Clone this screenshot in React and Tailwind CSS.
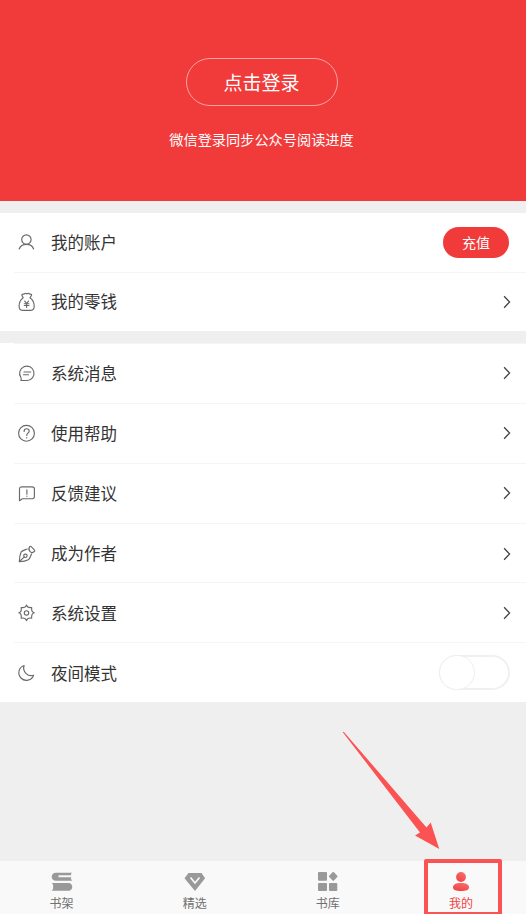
import React from "react";

const line = {
  fill: "none",
  stroke: "#6a6a6a",
  strokeWidth: 1.15,
  strokeLinecap: "round",
  strokeLinejoin: "round",
};

function Icon({ children }) {
  return (
    <svg className="h-5 w-5 shrink-0" viewBox="0 0 20 20" {...line}>
      {children}
    </svg>
  );
}

const icons = {
  user: (
    <Icon>
      <circle cx="9.4" cy="7.6" r="4.7" />
      <path d="M2.2 17C3.3 13.900 5.9 12.300 9.4 12.300s6.2 1.6 7.2 4.7" />
    </Icon>
  ),
  purse: (
    <Icon>
      <path d="M6.2 5.700 4.900 3.400c-.3-.8.4-1.300 1.400-1.300 1 0 1.300-.8 2.200-.8.7 0 .8.500 1.400.500s.8-.500 1.500-.500c.8 0 1 .8 2 .8s1.500.600 1.100 1.300L13 5.700c2.500 1.800 4.200 5 4.200 8.400 0 3-1 4.300-3.200 4.300H5.300c-2.200 0-3.200-1.300-3.200-4.300 0-3.400 1.600-6.600 4.100-8.400Z" />
      <path d="m7.700 9.200 1.900 2.300 1.900-2.300M7.300 11.700h4.700M7.300 13.500h4.700M9.600 11.500v3.900" />
    </Icon>
  ),
  message: (
    <Icon>
      <path d="M3.900 17c.8-.7.500-1.500-.1-2.700A7.200 7.200 0 1 1 10.300 17.500H4" />
      <path d="M7 9h6.700M6.500 11.700h5" />
    </Icon>
  ),
  help: (
    <Icon>
      <circle cx="9.500" cy="10.300" r="7.900" />
      <path d="M7.100 8.400c0-1.700 1-2.700 2.500-2.700s2.600 1 2.600 2.400c0 2-2.500 2.200-2.500 4.400M9.700 14.600v.3" />
    </Icon>
  ),
  feedback: (
    <Icon>
      <path d="M2.500 17.700V6c0-1.400.8-2.200 2.200-2.200h10.500c1.400 0 2.200.8 2.200 2.200v7.600c0 1.400-.8 2.100-2.200 2.100H5.300L2.500 17.700Z" />
      <path d="M9.900 6.700v4.500M9.900 13v.3" />
    </Icon>
  ),
  pen: (
    <Icon>
      <path d="M12.600 2.900c.5-.7 1-.8 1.600-.3l3.100 3.200c.6.700.6 1.200-.1 1.700-1.400 1.200-2.800 1.500-4.100.2s-1.500-3.200-.5-4.800Z" />
      <path d="M10.200 5C7.700 6 5.300 6.400 4 8.200c-1.200 3-1.600 5.900-1.700 9.500 3.500-.1 6.400-.5 9-1.900 2-1.300 2.200-3.700 3.200-5.900" />
      <circle cx="8.400" cy="11.800" r="1.700" />
      <path d="m2.500 17.500 4.600-4.400" />
    </Icon>
  ),
  gear: (
    <Icon>
      <path d="M9.500 2.100c.6 2.300 2 2.900 5.200 2.500-.4 3.100.3 4.600 2.600 5.200-2.300.7-3 2.200-2.600 5.300-3.200-.4-4.600.2-5.200 2.500-.7-2.300-2.100-2.900-5.300-2.500.5-3.100-.2-4.600-2.400-5.300 2.200-.6 2.900-2.100 2.400-5.200 3.200.400 4.600-.200 5.300-2.500Z" />
      <circle cx="9.500" cy="9.900" r="2.200" />
    </Icon>
  ),
  moon: (
    <Icon>
      <path d="M7.100 2.500a7.600 7.600 0 1 0 9.500 9.800A7.700 7.700 0 0 1 7.100 2.500Z" />
    </Icon>
  ),
};

function Chevron() {
  return (
    <svg className="mr-[14px] h-4 w-[10px]" viewBox="0 0 10 16" fill="none" stroke="#444" strokeWidth="1.3">
      <path d="m2.100 2.300 5.500 5.700-5.500 5.700" />
    </svg>
  );
}

function Row({ icon, label, height = "h-[60px]", pad = "pb-px", border = true, children }) {
  return (
    <div className={`${height} pl-[14px]`}>
      <div className={`flex h-full items-center ${pad} ${border ? "border-t border-[#f5f5f5]" : ""}`}>
        <div className="ml-[3px]">{icons[icon]}</div>
        <span className="ml-[14px] pb-px text-[16.5px] leading-6">{label}</span>
        <div className="ml-auto">{children || <Chevron />}</div>
      </div>
    </div>
  );
}

function Tab({ label, active, children }) {
  return (
    <div className={`flex w-6 flex-col items-center ${active ? "text-[#ef4444]" : "text-[#707070]"}`}>
      <svg className="mt-[10px] h-[22px] w-6 shrink-0" viewBox="0 0 24 22" fill="#999">
        {children}
      </svg>
      <span className="mt-[1px] whitespace-nowrap text-[12px] leading-[18px]">{label}</span>
    </div>
  );
}

export default function App() {
  return (
    <div className="relative flex h-[914px] w-[526px] flex-col overflow-hidden bg-[#efefef] font-['Noto_Sans_CJK_SC',sans-serif] text-[#333]">
      <header className="flex h-[201px] flex-col items-center bg-[#f03b3a] pr-[3px] text-white">
        <button className="mt-[58px] h-12 w-[152px] rounded-full border border-[#f8a3a3] pb-[2px] text-[19px] leading-none">
          点击登录
        </button>
        <p className="mt-[23px] text-[14.2px] leading-5">微信登录同步公众号阅读进度</p>
      </header>

      <section className="mt-3 h-[118px] bg-white">
        <Row icon="user" label="我的账户" height="h-[59px]" border={false}>
          <button className="mr-[17px] block h-[31px] w-[66px] rounded-full bg-[#f03b3a] text-[14px] leading-[30px] text-white">
            充值
          </button>
        </Row>
        <Row icon="purse" label="我的零钱" height="h-[59px]" />
      </section>

      <section className="mt-3 h-[359px] bg-white">
        <Row icon="message" label="系统消息" />
        <Row icon="help" label="使用帮助" />
        <Row icon="feedback" label="反馈建议" />
        <Row icon="pen" label="成为作者" height="h-[59px]" pad="pt-px" />
        <Row icon="gear" label="系统设置" pad="pt-px" />
        <Row icon="moon" label="夜间模式" pad="pt-px">
          <div className="mb-[2px] mr-4 h-[35px] w-[71px] rounded-full border-2 border-[#f0f0f0] bg-white">
            <div className="-ml-[2px] -mt-[2px] h-[35px] w-9 rounded-full border border-[#eee] bg-white" />
          </div>
        </Row>
      </section>

      <nav className="mt-auto flex h-[53px] justify-between bg-[#f9f9f9] pl-[49.5px] pr-[53px]">
        <Tab label="书架">
          <path d="M6 1.700h16l-1.200 1.500.6 1H8.500v2h12.900l-.6 1.300L22 9.800H6C.3 9.800.3 1.700 6 1.700Z" />
          <path d="M1.800 12h16.700c5 0 5 7.800 0 7.800H1.800l1.300-2v-4Z" />
        </Tab>
        <Tab label="精选">
          <path d="M5.500 1.900h13l3.600 5.400L12 20 1.500 7.300Z" />
          <path d="m7.500 6.500 4.500 5.500 4.500-5.500" fill="none" stroke="#f9f9f9" strokeWidth="1.700" />
        </Tab>
        <Tab label="书库">
          <rect x="2" y="1" width="9" height="8.700" rx="1" />
          <rect x="2" y="12" width="9" height="8" rx="1" />
          <rect x="13" y="12" width="8.300" height="8" rx="1" />
          <rect x="13.900" y="2" width="6.700" height="6.700" rx="1" transform="rotate(45 17.250 5.350)" />
        </Tab>
        <Tab label="我的" active>
          <defs>
            <linearGradient id="activeTab" x1="0.700" y1="0" x2="0.200" y2="1">
              <stop stopColor="#fb6b6b" />
              <stop offset="1" stopColor="#ef4040" />
            </linearGradient>
          </defs>
          <circle cx="12" cy="6" r="4.900" fill="url(#activeTab)" />
          <path d="M4 16.300C4 13.500 7 12 12 12s8 1.500 8 4.300-3 3.700-8 3.700-8-.9-8-3.700Z" fill="url(#activeTab)" />
        </Tab>
      </nav>

      <svg className="absolute left-[340px] top-[728px] h-[124px] w-[102px]" viewBox="0 0 102 124" fill="#fb5353">
        <path d="M2.800 4.200 3.700 3.700 86.500 99.500 90.700 94.500 99.300 121 75 107.500 80 104.500Z" />
      </svg>
      <div className="absolute left-[424px] top-[859px] h-[57px] w-[78px] rounded-[2px] border-4 border-[#fb5353]" />
    </div>
  );
}
